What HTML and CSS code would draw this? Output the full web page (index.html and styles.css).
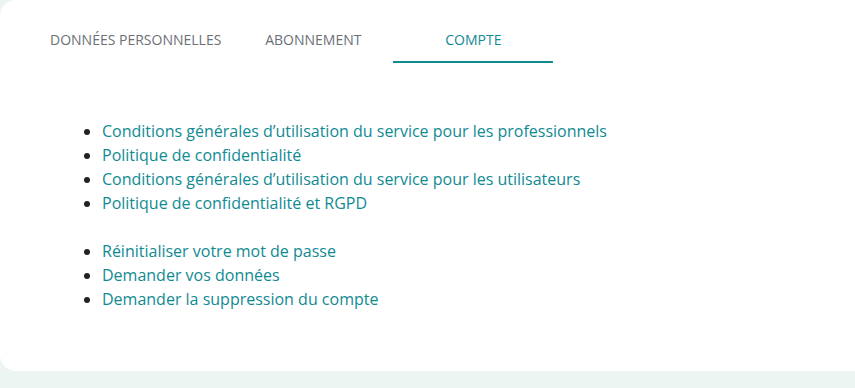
FILE: index.html
```html
<!DOCTYPE html>
<html lang="fr">
<head>
    <meta charset="UTF-8">
    <meta name="viewport" content="width=device-width, initial-scale=1.0">
    <title>Compte</title>
    <link rel="stylesheet" href="styles.css">
</head>
<body>
    <div class="card">
        <div class="tabs">
            <div class="tab">Données personnelles</div>
            <div class="tab">Abonnement</div>
            <div class="tab active">Compte</div>
        </div>
        <div class="content">
            <ul class="links">
                <li><a href="#">Conditions générales d’utilisation du service pour les professionnels</a></li>
                <li><a href="#">Politique de confidentialité</a></li>
                <li><a href="#">Conditions générales d’utilisation du service pour les utilisateurs</a></li>
                <li><a href="#">Politique de confidentialité et RGPD</a></li>
            </ul>
            <ul class="links">
                <li><a href="#">Réinitialiser votre mot de passe</a></li>
                <li><a href="#">Demander vos données</a></li>
                <li><a href="#">Demander la suppression du compte</a></li>
            </ul>
        </div>
    </div>
</body>
</html>
```

FILE: styles.css
```css
* {
    margin: 0;
    padding: 0;
    box-sizing: border-box;
}
html, body {
    width: 100%;
    height: 100%;
}
body {
    background-color: #edf5f2;
    font-family: "Open Sans", sans-serif;
    overflow: hidden;
}

.card {
    background-color: #fff;
    width: 880px;
    height: 371px;
    border-radius: 16px;
    padding: 0 0 0 38px;
}

.tabs {
    display: flex;
    padding-top: 30px;
}
.tab {
    min-width: 160px;
    padding: 0 12px;
    height: 33px;
    text-align: center;
    font-size: 14px;
    line-height: 20px;
    text-transform: uppercase;
    color: #6c6f76;
    border-bottom: 2px solid transparent;
}
.tab.active {
    color: #108a93;
    border-bottom-color: #108a93;
}

.content {
    padding: 56px 0 0 64px;
}
.links {
    margin-bottom: 24px;
    list-style: disc;
}
.links li {
    font-size: 16px;
    line-height: 24px;
    color: #222;
}
.links a {
    color: #108a93;
    text-decoration: none;
}
```
